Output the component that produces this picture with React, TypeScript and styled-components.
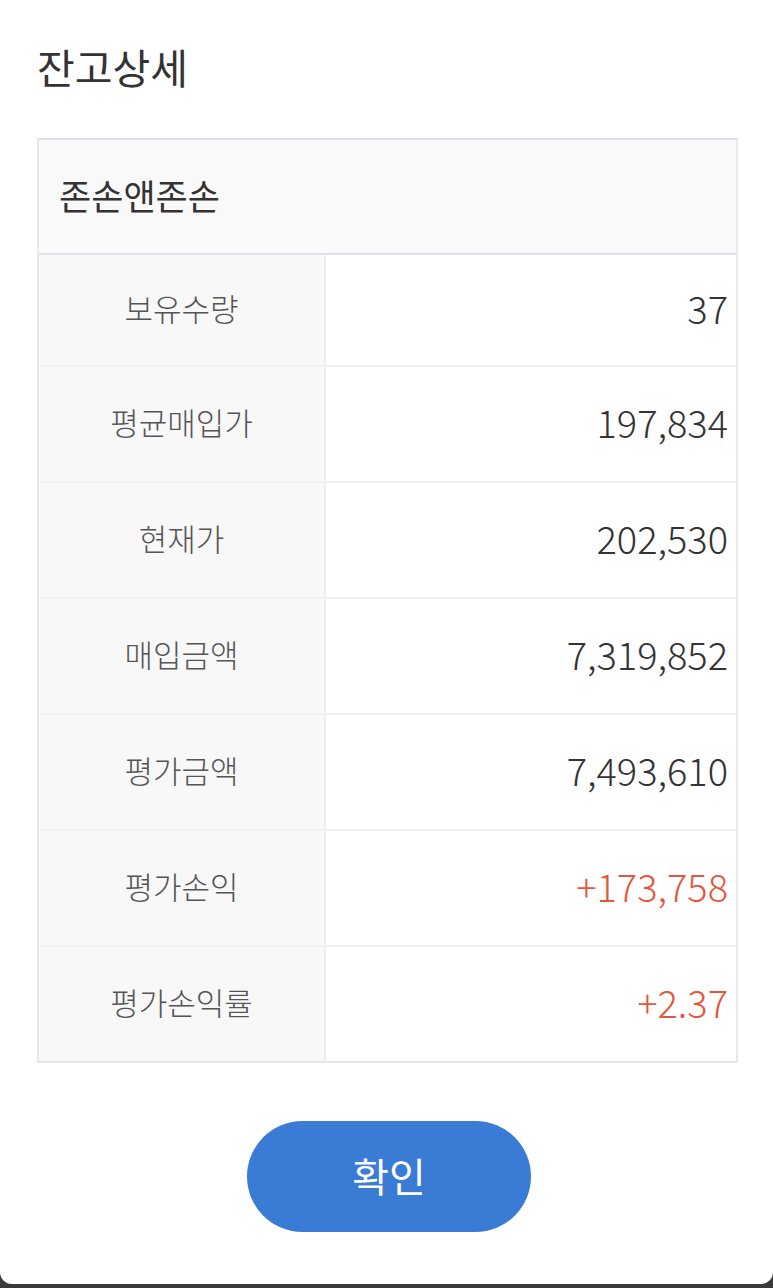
import { createGlobalStyle, styled } from "styled-components";

const GlobalStyle = createGlobalStyle`
  html, body {
    margin: 0;
    padding: 0;
    background: #3a3a3a;
  }
  body {
    font-family: "Noto Sans CJK KR", "Noto Sans", sans-serif;
  }
`;

const Panel = styled.div`
  box-sizing: border-box;
  width: 773px;
  height: 1284px;
  background: #ffffff;
  border-radius: 0 0 12px 12px;
  padding: 0 35px 0 37px;
  display: flex;
  flex-direction: column;
`;

const Title = styled.h1`
  margin: 38px 0 0 0;
  height: 100px;
  font-size: 41px;
  font-weight: 400;
  line-height: 56px;
  color: #333333;
`;

const Table = styled.div`
  border: 2px solid #e8e8ea;
  border-top-color: #dde1ea;
`;

const Header = styled.div`
  box-sizing: border-box;
  height: 115px;
  display: flex;
  align-items: center;
  padding: 0 0 4px 20px;
  background: #f9f9fa;
  border-bottom: 2px solid #dde1ea;
  font-size: 35px;
  color: #333333;
`;

const Body = styled.div`
  display: flex;
  flex-direction: column;
`;

const Row = styled.div`
  box-sizing: border-box;
  display: grid;
  grid-template-columns: 287px 1fr;
  height: 116px;
  border-top: 2px solid #f0f0f0;

  &:first-child {
    height: 110px;
    border-top: none;
  }
`;

const Label = styled.div`
  display: flex;
  align-items: center;
  justify-content: center;
  padding-bottom: 6px;
  background: #f8f8f8;
  border-right: 2px solid #eeeeee;
  font-size: 31px;
  font-weight: 300;
  color: #555555;
`;

const Value = styled.div<{ $accent?: boolean }>`
  display: flex;
  align-items: center;
  justify-content: flex-end;
  padding: 0 8px 6px 0;
  font-size: 38px;
  font-weight: 300;
  color: ${(p) => (p.$accent ? "#e5573d" : "#333333")};
`;

const Footer = styled.div`
  display: flex;
  justify-content: center;
  padding-top: 58px;
`;

const ConfirmButton = styled.button`
  width: 284px;
  height: 111px;
  padding-bottom: 4px;
  border: none;
  border-radius: 56px;
  background: #3a7bd6;
  color: #ffffff;
  font-family: "Noto Sans CJK KR", "Noto Sans", sans-serif;
  font-size: 40px;
  margin-left: 3px;
  cursor: pointer;
`;

const rows = [
  { label: "보유수량", value: "37" },
  { label: "평균매입가", value: "197,834" },
  { label: "현재가", value: "202,530" },
  { label: "매입금액", value: "7,319,852" },
  { label: "평가금액", value: "7,493,610" },
  { label: "평가손익", value: "+173,758", accent: true },
  { label: "평가손익률", value: "+2.37", accent: true },
];

const App = () => {
  return (
    <>
      <GlobalStyle />
      <Panel>
        <Title>잔고상세</Title>
        <Table>
          <Header>존손앤존손</Header>
          <Body>
            {rows.map((r) => (
              <Row key={r.label}>
                <Label>{r.label}</Label>
                <Value $accent={r.accent}>{r.value}</Value>
              </Row>
            ))}
          </Body>
        </Table>
        <Footer>
          <ConfirmButton>확인</ConfirmButton>
        </Footer>
      </Panel>
    </>
  );
};

export default App;
